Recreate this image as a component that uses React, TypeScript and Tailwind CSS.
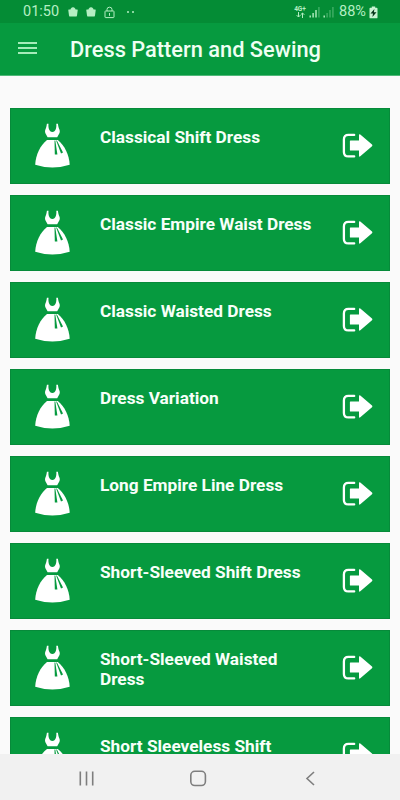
import React from "react";

const patterns = [
  "Classical Shift Dress",
  "Classic Empire Waist Dress",
  "Classic Waisted Dress",
  "Dress Variation",
  "Long Empire Line Dress",
  "Short-Sleeved Shift Dress",
  "Short-Sleeved Waisted Dress",
  "Short Sleeveless Shift",
];

const BagIcon = () => (
  <svg width="10" height="10" viewBox="0 0 10 10" fill="currentColor">
    <path d="M0.8 2.6H9.2Q9.8 2.6 9.7 3.2L9 8.4Q8.8 9.6 7.7 9.6H2.3Q1.2 9.6 1 8.4L.3 3.2Q.2 2.6 .8 2.6Z" />
    <path d="M3 3V2.2Q3 .8 5 .8T7 2.2V3Z" stroke="currentColor" />
  </svg>
);

const LockIcon = () => (
  <svg width="11" height="13" viewBox="0 0 11 13" fill="none" stroke="currentColor">
    <rect x="1" y="5" width="9" height="6.6" rx="0.6" />
    <path d="M3 5V3.4Q3 1.2 5.5 1.2T8 3.4V5M5.5 7V9.8" />
  </svg>
);

const SignalIcon = ({ level }: { level: number }) => (
  <svg width="12" height="12" viewBox="0 0 12 12" fill="currentColor">
    <rect x="0.5" y="9.5" width="1.4" height="2" />
    <rect x="3.4" y="7" width="1.4" height="4.5" opacity={level > 1 ? 1 : 0.35} />
    <rect x="6.3" y="4" width="1.4" height="7.5" opacity={level > 2 ? 1 : 0.35} />
    <rect x="9.2" y="1" width="1.4" height="10.5" opacity="0.35" />
  </svg>
);

const BatteryIcon = () => (
  <svg width="9" height="13" viewBox="0 0 9 13">
    <path d="M2.8 0.4H6.2V1.7H7.6Q8.5 1.7 8.5 2.6V11.4Q8.5 12.3 7.6 12.3H1.4Q.5 12.3 .5 11.4V2.6Q.5 1.7 1.4 1.7H2.8Z" fill="#c9f3d3" />
    <path d="M5.4 3L1.5 7.5H4L3.4 11L7.5 6.3H4.9Z" fill="#06351a" />
  </svg>
);

const DressIcon = () => (
  <svg width="36" height="46" viewBox="0 0 36 46" fill="#fff" className="shrink-0">
    <path d="M11.9 .8C11.5 3.2 11.2 4.8 10.4 6.6C9.9 7.9 9.9 9 10.4 10.2L12.6 14.2H22.2L24.4 10.2C24.9 9 24.9 7.9 24.4 6.6C23.6 4.8 23.3 3.2 22.9 .8H21.3C21.7 4.5 20.8 9 17.4 9S13.1 4.5 13.5 .8Z" />
    <path d="M12 16.9H22.8C29.5 22 34.3 32 34.7 41.8Q26 44.6 17.4 44.6T.2 41.8C.6 32 5.3 22 12 16.9Z" />
    <path d="M19.5 17.6H20.3L22.4 31.6H19.8Z" fill="#069a3f" />
    <path d="M21.1 17.6H21.9L28 29.6L26 30.4Z" fill="#069a3f" />
  </svg>
);

const OpenIcon = () => (
  <svg width="31" height="25" viewBox="0 0 31 25" fill="#fff" className="shrink-0">
    <path d="M12.2 1.9H6.4Q1.9 1.9 1.9 6.4V18.9Q1.9 23.4 6.4 23.4H12.2" fill="none" stroke="#fff" strokeWidth="2.3" strokeLinecap="round" />
    <path d="M8.4 7.5H17V2Q17 .5 18.3 1.6L30 11.6Q30.9 12.4 30 13.2L18.3 23.3Q17 24.4 17 22.8V17.6H8.4Q7.9 17.6 7.9 17.1V8Q7.9 7.5 8.4 7.5Z" />
  </svg>
);

const StatusBar = () => {
  return (
    <div className="flex h-[23px] shrink-0 items-center bg-[#048c35] pt-px pr-[22px] pl-[23px] text-[#b5efc3]">
      <span className="w-[45px] text-[14.5px] leading-none">01:50</span>
      <div className="flex items-center gap-2">
        <BagIcon />
        <BagIcon />
        <LockIcon />
      </div>
      <div className="ml-[12px] flex gap-[3px]">
        <i className="size-[2px] rounded-full bg-current" />
        <i className="size-[2px] rounded-full bg-current" />
      </div>
      <div className="ml-auto flex items-center">
        <div className="mr-[3px] flex w-[12px] flex-col items-center">
          <span className="text-[6.5px] leading-[6px] font-bold">4G+</span>
          <svg width="9" height="6" viewBox="0 0 9 6" fill="none" stroke="currentColor">
            <path d="M2.5 0V5M.7 3.2L2.5 5L4.3 3.2M6.5 6V1M4.7 2.8L6.5 1L8.3 2.8" />
          </svg>
        </div>
        <SignalIcon level={3} />
        <div className="ml-[2px]">
          <SignalIcon level={1} />
        </div>
        <span className="ml-[4px] w-[30px] text-[14.5px] leading-none">88%</span>
        <BatteryIcon />
      </div>
    </div>
  );
};

const Header = () => {
  return (
    <div className="flex h-[53px] shrink-0 items-center border-b border-[#4fb878] bg-[#069a3f] pl-[18px]">
      <div className="mb-[3px] flex w-[52px] flex-col gap-[3px]">
        <span className="h-[2px] w-[19px] bg-[#a5ecb9]" />
        <span className="h-[2px] w-[19px] bg-[#a5ecb9]" />
        <span className="h-[2px] w-[19px] bg-[#a5ecb9]" />
      </div>
      <h1 className="mt-px text-[21.8px] leading-6 font-medium text-[#effff3]">Dress Pattern and Sewing</h1>
    </div>
  );
};

const PatternCard = ({ title }: { title: string }) => {
  return (
    <div className="flex h-[76px] shrink-0 border border-[#078a3a] bg-[#069a3f] pt-[14px] pr-[16px] pl-[24px]">
      <DressIcon />
      <p className="mt-[4px] ml-[29px] w-[220px] text-[17.25px] leading-5 font-bold text-[#f7fff9]">{title}</p>
      <div className="mt-[10px] ml-auto">
        <OpenIcon />
      </div>
    </div>
  );
};

const NavBar = () => {
  return (
    <div className="h-[46px] shrink-0 bg-[#f1f1f1]">
      <svg width="400" height="46" viewBox="0 0 400 46" fill="none" stroke="#7e7e7e" strokeWidth="1.6">
        <path d="M80.3 17.5V31.5M86.5 17.5V31.5M92.7 17.5V31.5" />
        <rect x="190.8" y="17.3" width="14.6" height="14.2" rx="4" />
        <path d="M314 18L307 24.5L314 31" />
      </svg>
    </div>
  );
};

const App = () => {
  return (
    <div className="flex h-[800px] w-[400px] flex-col overflow-hidden bg-[#fafafa] font-[Roboto,sans-serif]">
      <StatusBar />
      <Header />
      <div className="flex min-h-0 flex-1 flex-col gap-[11px] overflow-hidden px-[10px] pt-[32px]">
        {patterns.map((title) => (
          <PatternCard key={title} title={title} />
        ))}
      </div>
      <NavBar />
    </div>
  );
};

export default App;
